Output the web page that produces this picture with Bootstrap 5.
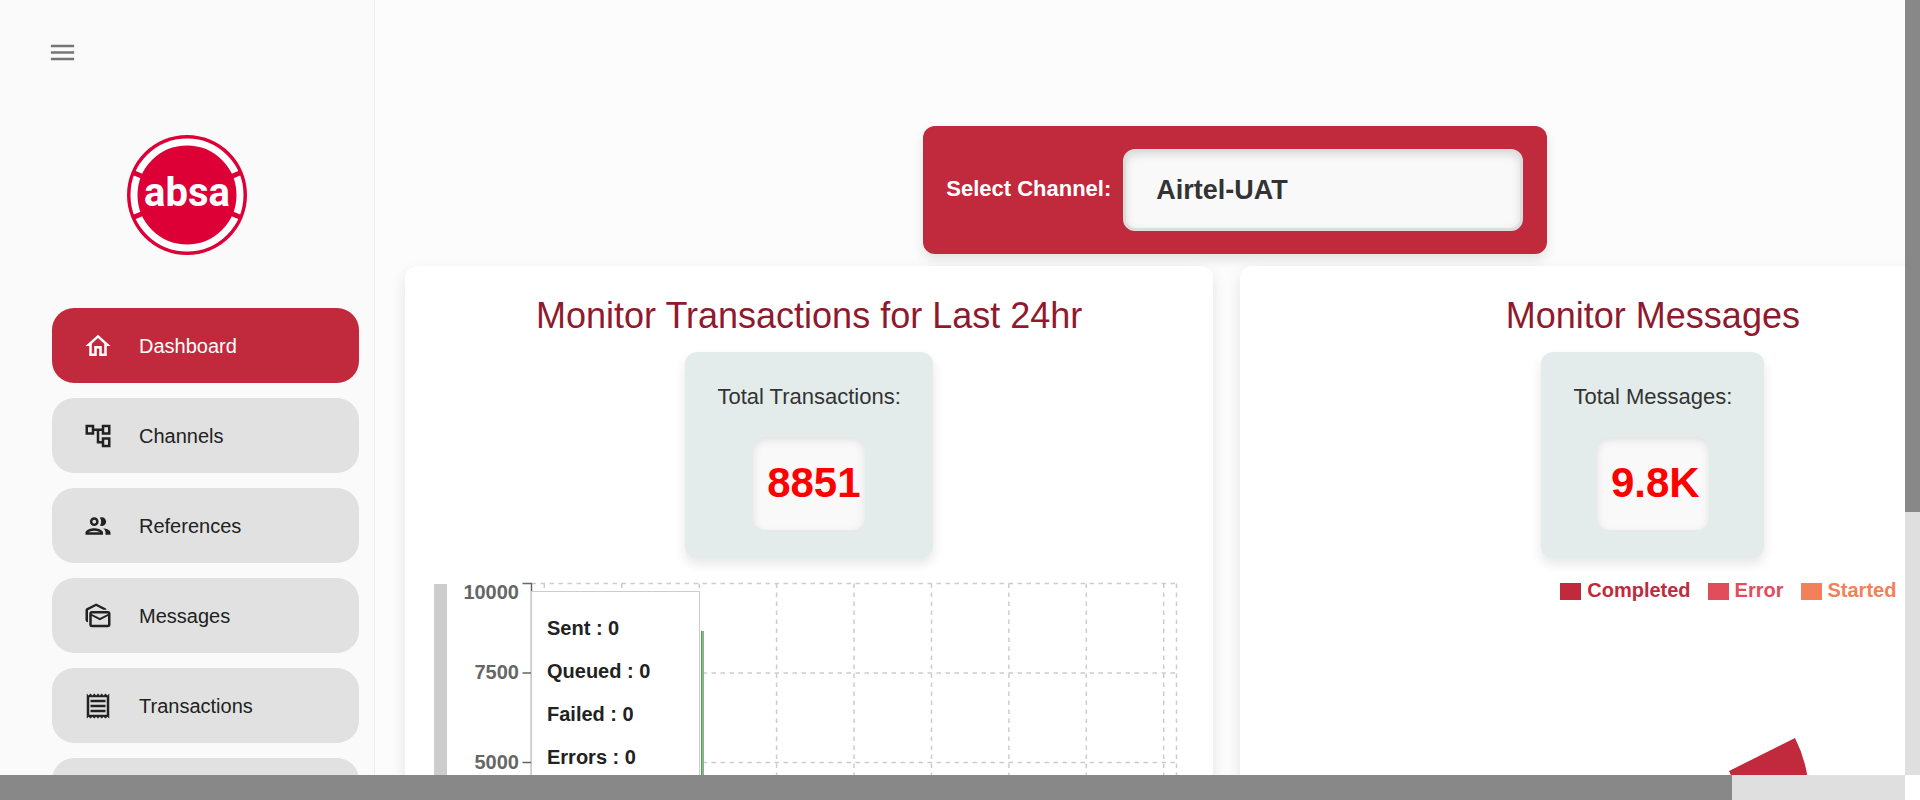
<!DOCTYPE html>
<html lang="en">
<head>
<meta charset="utf-8">
<meta name="viewport" content="width=device-width, initial-scale=1">
<title>Dashboard</title>
<link href="https://cdn.jsdelivr.net/npm/bootstrap@5.3.0/dist/css/bootstrap.min.css" rel="stylesheet">
<style>
  body { font-family: "Liberation Sans", Arial, sans-serif; font-size: 20px; color: #222; background: #fcfcfc; }
  .track { background: #dfdfdf; }
  .thumb { background: #888; }
  .track-y { width: 15px; }
  .track-x { height: 25px; padding-right: 15px; background: linear-gradient(to left, #fff 15px, #dfdfdf 15px); }
  .canvas { width: 110%; }
  .sidebar { width: 375px; background: #fafafa; border-right: 1px solid #ececec; }
  .menu-btn { margin: 34px 0 0 44px; width: 36px; height: 36px; }
  .logo { margin-top: 65px; }
  .side-nav { margin-top: 53px; padding: 0 15px 0 52px; gap: 15px; }
  .side-nav .nav-link { height: 75px; padding: 0 31px; gap: 26px; border-radius: 22px; background: #e1e1e1; color: #222; }
  .side-nav .nav-link.active { background: #c12a3c; color: #fff; }
  .main-pane { padding: 126px 30px 0; }
  .channel { background: #c12a3c; width: 624px; padding: 23px 24px 23px 23px; border-radius: 12px; box-shadow: 0 6px 12px rgba(0,0,0,.1); }
  .channel label { font-size: 22px; color: #fff; padding-bottom: 4px; }
  .channel select { appearance: none; width: 400px; height: 82px; padding: 0 30px; border: 3px solid #ddd; border-radius: 12px; background: #f9f9f9; color: #333; font-size: 27px; box-shadow: inset 0 3px 9px rgba(0,0,0,.12); }
  .boards { margin-top: 12px; gap: 27px; }
  .board { background: #fff; border-radius: 12px; padding-top: 26px; box-shadow: 0 6px 15px rgba(0,0,0,.1); min-width: 0; height: 900px; }
  .board-tx { flex: 808 1 0; }
  .board-msg { flex: 825 1 0; }
  .board h2 { font-size: 36px; line-height: 48px; margin-bottom: 12px; color: #8f1a2e; }
  .total { background: #e4eceb; border-radius: 12px; height: 206px; padding: 28px 32px; box-shadow: 0 6px 12px rgba(0,0,0,.1); }
  .total-label { font-size: 22px; line-height: 34px; color: #333; }
  .total-value { margin-top: 23px; width: 112px; height: 93px; padding-left: 14px; line-height: 92px; font-size: 42px; color: red; background: #f9f9f9; border-radius: 12px; box-shadow: inset 0 3px 9px rgba(0,0,0,.1); }
  .chart-row { margin: 18px 0 0 29px; padding-top: 8px; }
  .chart-scroll { width: 13px; height: 500px; background: #ccc; }
  .chart { margin-top: -8px; }
  .tip { left: 84px; top: 15px; width: 169px; padding: 15px; border: 1px solid #ccc; background: #fff; height: 400px; }
  .tip div { line-height: 43px; }
  .legend { margin: 17px 0 0 320px; gap: 17px; line-height: 30px; }
  .legend span { display: flex; align-items: center; gap: 6px; }
  .legend i { width: 21px; height: 17px; background: currentColor; margin-top: 3px; }
  .key-completed { color: #c12a3c; }
  .key-error { color: #e24d5c; }
  .key-started { color: #f4805b; }
  .pie { margin: 125px 0 0 300px; }
</style>
</head>
<body>
<div class="vh-100 d-flex flex-column overflow-hidden">
  <div class="d-flex flex-grow-1 overflow-hidden">
    <div class="flex-grow-1 overflow-hidden">
      <div class="canvas d-flex">
        <aside class="sidebar flex-shrink-0 d-flex flex-column">
          <button class="menu-btn btn p-0 border-0 d-flex align-items-center justify-content-center" type="button" aria-label="Menu">
            <svg width="31" height="31" viewBox="0 0 24 24" fill="#757575"><path d="M3 18h18v-2H3v2zm0-5h18v-2H3v2zm0-7v2h18V6H3z"/></svg>
          </button>
          <svg class="logo align-self-center" width="120" height="120" viewBox="0 0 120 120">
            <circle cx="60" cy="60" r="60" fill="#dc0037"/>
            <circle cx="60" cy="60" r="53" fill="none" stroke="#fff" stroke-width="7"/>
            <path d="M6 37.500 L18 42.500M114 37.500 L102 42.500M6 82.500 L18 77.500M114 82.500 L102 77.500" stroke="#dc0037" stroke-width="5"/>
            <text x="60" y="71" text-anchor="middle" font-family="Roboto, sans-serif" font-weight="700" font-size="40" fill="#fff">absa</text>
          </svg>
          <nav class="side-nav nav flex-column flex-nowrap">
            <a class="nav-link active d-flex align-items-center" href="#"><svg width="30" height="30" viewBox="0 0 24 24" fill="currentColor"><path d="m12 5.690 5 4.500V18h-2v-6H9v6H7v-7.810l5-4.500M12 3 2 12h3v8h6v-6h2v6h6v-8h3L12 3z"/></svg>Dashboard</a>
            <a class="nav-link d-flex align-items-center" href="#"><svg width="30" height="30" viewBox="0 0 24 24" fill="currentColor"><path d="M22 11V3h-7v3H9V3H2v8h7V8h2v10h4v3h7v-8h-7v3h-2V8h2v3h7zM7 9H4V5h3v4zm10 6h3v4h-3v-4zm0-10h3v4h-3V5z"/></svg>Channels</a>
            <a class="nav-link d-flex align-items-center" href="#"><svg width="30" height="30" viewBox="0 0 24 24" fill="currentColor"><path d="M9 13.750c-2.340 0-7 1.170-7 3.500V19h14v-1.750c0-2.330-4.660-3.500-7-3.500zM4.340 17c.84-.58 2.870-1.250 4.660-1.250s3.820.67 4.660 1.250H4.340zM9 12c1.930 0 3.500-1.570 3.500-3.500S10.930 5 9 5 5.500 6.570 5.500 8.500 7.070 12 9 12zm0-5c.83 0 1.500.67 1.500 1.500S9.830 10 9 10s-1.500-.67-1.500-1.500S8.170 7 9 7zm7.040 6.810c1.160.84 1.960 1.960 1.960 3.440V19h4v-1.750c0-2.020-3.500-3.170-5.960-3.440zM15 12c1.930 0 3.500-1.570 3.500-3.500S16.930 5 15 5c-.54 0-1.040.13-1.500.35.63.89 1 1.980 1 3.150s-.37 2.260-1 3.150c.46.22.96.35 1.500.35z"/></svg>References</a>
            <a class="nav-link d-flex align-items-center" href="#"><svg width="30" height="30" viewBox="0 0 24 24" fill="currentColor"><path d="M18.830 7h-2.600L10.500 4 4 7.400V17c-1.100 0-2-.9-2-2V7.170c0-.53.32-1.090.8-1.340L10.500 2l7.540 3.830c.43.23.73.7.79 1.170zM20 8H7c-1.100 0-2 .9-2 2v9c0 1.100.9 2 2 2h13c1.100 0 2-.9 2-2v-9c0-1.100-.9-2-2-2zm0 11H7v-7l6.500 3.330L20 12v7zm0-8.670-6.500 3.330L7 10.330V10h13v.33z"/></svg>Messages</a>
            <a class="nav-link d-flex align-items-center" href="#"><svg width="30" height="30" viewBox="0 0 24 24" fill="currentColor"><path d="M19.500 3.500 18 2l-1.500 1.500L15 2l-1.500 1.500L12 2l-1.500 1.500L9 2 7.500 3.500 6 2 4.500 3.500 3 2v20l1.500-1.500L6 22l1.500-1.500L9 22l1.500-1.500L12 22l1.500-1.500L15 22l1.500-1.500L18 22l1.500-1.500L21 22V2l-1.500 1.500zM19 19.090H5V4.910h14v14.180zM6 15h12v2H6zm0-4h12v2H6zm0-4h12v2H6z"/></svg>Transactions</a>
            <a class="nav-link" href="#" aria-label="More"></a>
          </nav>
        </aside>
        <main class="main-pane flex-grow-1">
          <div class="channel d-flex align-items-center justify-content-between mx-auto">
            <label class="fw-bold" for="channel">Select Channel:</label>
            <select class="fw-bold" id="channel"><option>Airtel-UAT</option></select>
          </div>
          <div class="boards d-flex">
            <section class="board board-tx">
              <div class="d-flex flex-column align-items-center">
                <h2 class="fw-normal">Monitor Transactions for Last 24hr</h2>
                <div class="total d-flex flex-column align-items-center">
                  <div class="total-label">Total Transactions:</div>
                  <div class="total-value fw-bold">8851</div>
                </div>
              </div>
              <div class="chart-row d-flex">
                <div class="chart-scroll"></div>
                <div class="chart position-relative">
                  <svg class="d-block" width="740" height="508" viewBox="447 576 740 508">
                    <g stroke="#ccc" stroke-width="1.500" stroke-dasharray="4.500 4.500">
                      <path d="M531.500 583.500H1176.500M531.500 673H1176.500M531.500 762.500H1176.500"/>
                      <path d="M544.300 583.500V942M621.800 583.500V942M699.200 583.500V942M776.600 583.500V942M854 583.500V942M931.500 583.500V942M1008.900 583.500V942M1086.300 583.500V942M1163.700 583.500V942M1176.500 583.500V942"/>
                    </g>
                    <path d="M522.500 583.500H531.500M522.500 673H531.500M522.500 762.500H531.500M531.500 583V942" stroke="#666" stroke-width="1.500"/>
                    <path d="M701 631h3v311h-3z" fill="#82b886"/><path d="M701 631h1v311h-1z" fill="#5c9c60"/>
                    <g fill="#666" font-weight="700" font-size="20" text-anchor="end">
                      <text x="519" y="599">10000</text><text x="519" y="679">7500</text><text x="519" y="769">5000</text>
                    </g>
                  </svg>
                  <div class="tip position-absolute fw-bold">
                    <div>Sent : 0</div><div>Queued : 0</div><div>Failed : 0</div><div>Errors : 0</div>
                  </div>
                </div>
              </div>
            </section>
            <section class="board board-msg">
              <div class="d-flex flex-column align-items-center">
                <h2 class="fw-normal">Monitor Messages</h2>
                <div class="total d-flex flex-column align-items-center">
                  <div class="total-label">Total Messages:</div>
                  <div class="total-value fw-bold">9.8K</div>
                </div>
              </div>
              <div class="legend d-flex fw-bold">
                <span class="key-completed"><i></i>Completed</span>
                <span class="key-error"><i></i>Error</span>
                <span class="key-started"><i></i>Started</span>
              </div>
              <svg class="pie d-block" width="300" height="150" viewBox="1540 730 300 150"><path d="M1729 771 1795 738A131 131 0 0 1 1809 797H1735A57 57 0 0 0 1729 771z" fill="#c12a3c"/></svg>
            </section>
          </div>
        </main>
      </div>
    </div>
    <div class="track track-y flex-shrink-0"><div class="thumb" style="height:66%"></div></div>
  </div>
  <div class="track-x flex-shrink-0"><div class="thumb h-100" style="width:90.900%"></div></div>
</div>
<script src="https://cdn.jsdelivr.net/npm/bootstrap@5.3.0/dist/js/bootstrap.bundle.min.js"></script>
</body>
</html>
